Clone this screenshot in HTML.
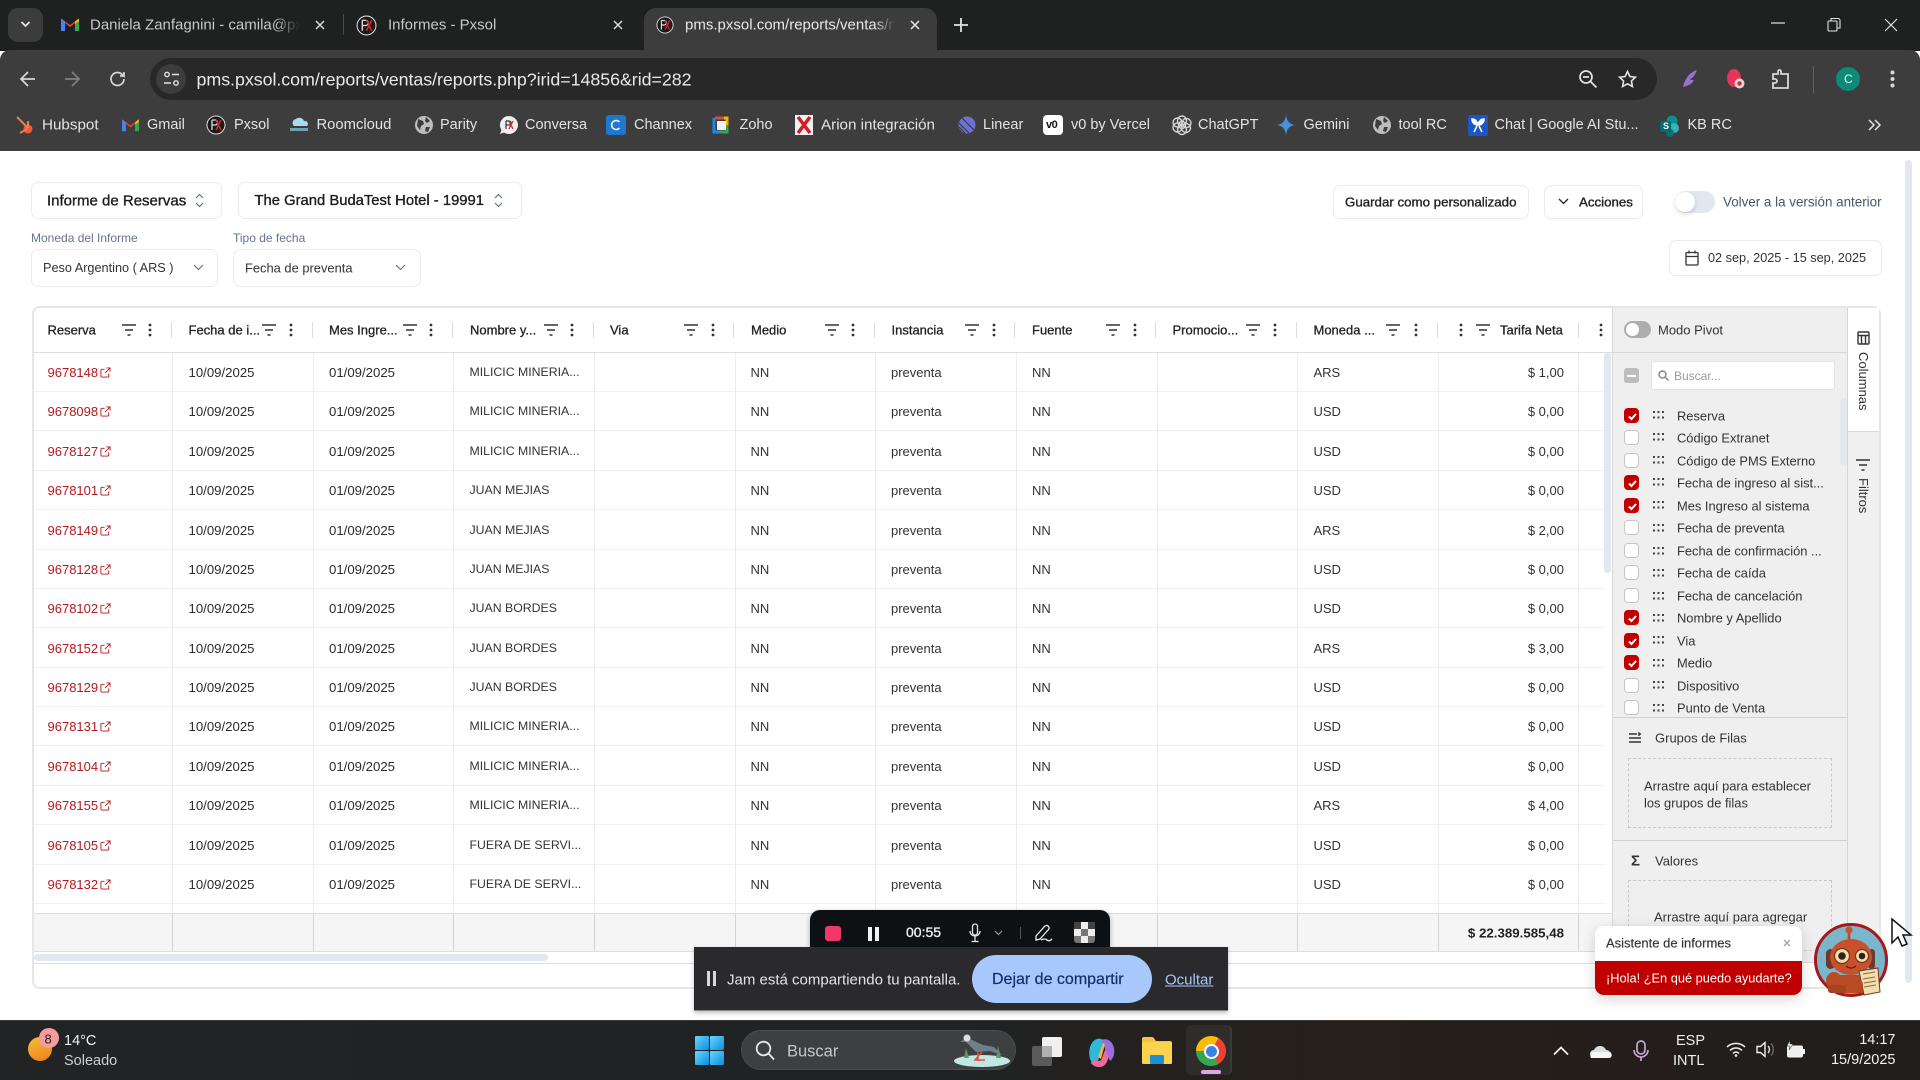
<!DOCTYPE html>
<html lang="es">
<head>
<meta charset="utf-8">
<title>pms.pxsol.com</title>
<style>
*{box-sizing:border-box}
html,body{margin:0;padding:0}
body{position:relative;width:1920px;height:1080px;overflow:hidden;background:#fff;font-family:"Liberation Sans",sans-serif;font-size:13px;color:#333}
.a{position:absolute}
.t{position:absolute;white-space:nowrap;transform:translateY(-50%)}
.m{-webkit-text-stroke:.35px currentColor}
.b{position:absolute;background:#fff;border:1px solid #e8ebef;border-radius:7px}
.ic{position:absolute;overflow:visible}
.bm{position:absolute;top:125px;transform:translateY(-50%);color:#e3e3e3;font-size:14.5px;white-space:nowrap}
.tabt{position:absolute;top:25px;transform:translateY(-50%);font-size:15px;white-space:nowrap;overflow:hidden}
.r{position:absolute;left:34px;width:1569px;height:39.4px;line-height:39px;border-bottom:1px solid #f1f1f1;color:#333;font-size:13px}
.r>*{position:absolute;white-space:nowrap;top:0}
.r>a{left:13.5px;color:#b3191f}
.r>a svg{position:absolute;left:52.500px;top:14px}
.r>.d{left:154.500px;color:#2b2b2b;font-size:13.2px}.r>.e{left:295px;color:#2b2b2b;font-size:13.2px}.r>.f{left:435.5px;font-size:12.3px}.r>.g{left:716.5px}.r>.h{left:857px}.r>.i{left:998px}.r>.j{left:1279.5px}.r>.k{right:39px}
.vl{position:absolute;top:353px;height:551px;width:1px;background:#ececec}
.fvl{position:absolute;top:914px;height:37px;width:1px;background:#d4d4d4}
.hd{position:absolute;top:330px;transform:translateY(-50%);font-size:13px;color:#222;white-space:nowrap;-webkit-text-stroke:.3px #222}
.sep{position:absolute;top:322px;height:16px;width:1px;background:#dcdcdc}
.li{position:absolute;left:0;width:234px;height:22px}
.li i{position:absolute;left:11px;top:3px;width:15px;height:15px;border:1px solid #c6c6c6;border-radius:4px;background:#fff}
.li i.on{background:#c00000;border-color:#c00000}
.li i.on svg{position:absolute;left:2px;top:2px}
.li svg.gr{position:absolute;left:40px;top:6.500px}
.li span{position:absolute;left:64px;top:11px;transform:translateY(-50%);white-space:nowrap;font-size:12.9px;color:#333}
</style>
</head>
<body>
<svg width="0" height="0" style="position:absolute">
<symbol id="flt" viewBox="0 0 14 12"><path d="M0 1h14M3 6h8M5.5 11h3" stroke="#333" stroke-width="1.6" fill="none"/></symbol>
<symbol id="keb" viewBox="0 0 4 14"><circle cx="2" cy="2" r="1.4" fill="#333"/><circle cx="2" cy="7" r="1.4" fill="#333"/><circle cx="2" cy="12" r="1.4" fill="#333"/></symbol>
<symbol id="ext" viewBox="0 0 12 12"><path d="M9.5 7v3a1 1 0 0 1-1 1H2a1 1 0 0 1-1-1V3.500a1 1 0 0 1 1-1h3M7 1h4v4M11 1L5.500 6.500" stroke="#b3191f" stroke-width="1" fill="none"/></symbol>
<symbol id="chk" viewBox="0 0 11 11"><path d="M2 5.500l2.500 2.500L9 3" stroke="#fff" stroke-width="2" fill="none"/></symbol>
<symbol id="grip" viewBox="0 0 12 8"><g fill="#444"><rect x="0" y="0" width="2" height="2"/><rect x="4.500" y="0" width="2" height="2"/><rect x="9" y="0" width="2" height="2"/><rect x="0" y="5.500" width="2" height="2"/><rect x="4.500" y="5.500" width="2" height="2"/><rect x="9" y="5.500" width="2" height="2"/></g></symbol>
<symbol id="px" viewBox="0 0 20 20"><circle cx="10" cy="10" r="9" fill="#1a1a1a" stroke="#ddd" stroke-width="1"/><path d="M6 5v10M6 5h3a2.500 2.500 0 0 1 0 5H6" stroke="#ddd" stroke-width="1.300" fill="none"/><path d="M10 15L15 5M10 5l5 10" stroke="#d2282e" stroke-width="1.500"/></symbol>
<symbol id="gm" viewBox="0 0 20 16"><path d="M1 15V2.500L10 9l9-6.500V15h-4V7l-5 4-5-4v8z" fill="#ea4335"/><path d="M1 15V2.500l4 3V15z" fill="#4285f4"/><path d="M15 15V5.500l4-3V15z" fill="#34a853"/><path d="M15 5.500l4-3V5l-4 3z" fill="#fbbc04"/></symbol>
<symbol id="gl" viewBox="0 0 20 20"><circle cx="10" cy="10" r="9" fill="#bdbdbd"/><path d="M4 4l5 2 1 3-3 2-1 4-3-4zM12 2l4 4-3 2-2-2zM12 12l4 0-2 5-3-1z" fill="#3c3c3c"/></symbol>
</svg>

<!-- Chrome frame -->
<div class="a" style="left:0;top:0;width:1920px;height:51px;background:#1f2020"></div>
<div class="a" style="left:8px;top:8px;width:35px;height:34px;background:#3c3c3c;border-radius:10px"></div>
<svg class="ic" style="left:20px;top:20px" width="11" height="9" viewBox="0 0 11 9"><path d="M1.500 2l4 4 4-4" stroke="#e3e3e3" stroke-width="1.800" fill="none"/></svg>
<svg class="ic" style="left:60px;top:16px" width="20" height="16"><use href="#gm"/></svg>
<div class="tabt" style="left:90px;width:210px;color:#c8c8c8;-webkit-mask-image:linear-gradient(90deg,#000 88%,transparent)">Daniela Zanfagnini - camila@pxsol.com</div>
<svg class="ic" style="left:315px;top:20px" width="10" height="10"><path d="M1 1l8 8M9 1l-8 8" stroke="#d8d8d8" stroke-width="1.500"/></svg>
<div class="a" style="left:343px;top:14px;width:1px;height:21px;background:#4a4a4a"></div>
<svg class="ic" style="left:356px;top:15px" width="21" height="21"><use href="#px"/></svg>
<div class="tabt" style="left:388px;color:#c8c8c8">Informes - Pxsol</div>
<svg class="ic" style="left:613px;top:20px" width="10" height="10"><path d="M1 1l8 8M9 1l-8 8" stroke="#d8d8d8" stroke-width="1.500"/></svg>
<div class="a" style="left:644px;top:8px;width:293px;height:46px;background:#3c3c3c;border-radius:12px 12px 0 0"></div>
<svg class="ic" style="left:656px;top:16px" width="18" height="18"><use href="#px"/></svg>
<div class="tabt" style="left:685px;width:210px;color:#e8e8e8;-webkit-mask-image:linear-gradient(90deg,#000 90%,transparent)">pms.pxsol.com/reports/ventas/reports.php</div>
<svg class="ic" style="left:910px;top:20px" width="10" height="10"><path d="M1 1l8 8M9 1l-8 8" stroke="#e8e8e8" stroke-width="1.500"/></svg>
<svg class="ic" style="left:954px;top:18px" width="14" height="14"><path d="M7 0v14M0 7h14" stroke="#e3e3e3" stroke-width="1.800"/></svg>
<svg class="ic" style="left:1771px;top:22px" width="14" height="2"><path d="M0 1h14" stroke="#e3e3e3" stroke-width="1.200"/></svg>
<svg class="ic" style="left:1827px;top:17px" width="14" height="15" fill="none" stroke="#e3e3e3" stroke-width="1.100"><rect x="1" y="4" width="9" height="10" rx="1"/><path d="M4 4V1.500h7a2 2 0 0 1 2 2V11h-3"/></svg>
<svg class="ic" style="left:1884px;top:18px" width="14" height="14"><path d="M1 1l12 12M13 1L1 13" stroke="#e3e3e3" stroke-width="1.200"/></svg>

<div class="a" style="left:0;top:50px;width:1920px;height:101px;background:#3d3d3d;border-radius:10px 10px 0 0"></div>
<div class="a" style="left:644px;top:40px;width:293px;height:14px;background:#3d3d3d"></div>
<svg class="ic" style="left:19px;top:70px" width="18" height="18" fill="none" stroke="#d8d8d8" stroke-width="1.700"><path d="M16 9H2M9 2L2 9l7 7"/></svg>
<svg class="ic" style="left:63px;top:70px" width="18" height="18" fill="none" stroke="#7f7f7f" stroke-width="1.700"><path d="M2 9h14M9 2l7 7-7 7"/></svg>
<svg class="ic" style="left:109px;top:70px" width="18" height="18" fill="none" stroke="#d8d8d8" stroke-width="1.700"><path d="M15 9a6.500 6.500 0 1 1-2-4.700L15 6V2M15 6h-4"/></svg>
<div class="a" style="left:150px;top:58px;width:1507px;height:42px;background:#282828;border-radius:21px"></div>
<div class="a" style="left:156px;top:64px;width:30px;height:30px;background:#3d3d3d;border-radius:50%"></div>
<svg class="ic" style="left:163px;top:71px" width="17" height="16" fill="none" stroke="#e3e3e3" stroke-width="1.400"><circle cx="4" cy="3.500" r="2.200"/><path d="M9 3.500h7M1 12h7"/><circle cx="13" cy="12" r="2.200"/></svg>
<div class="t" style="left:196.500px;top:80px;font-size:17.85px;color:#e8e8e8;letter-spacing:-.05px">pms.pxsol.com/reports/ventas/reports.php?irid=14856&amp;rid=282</div>
<svg class="ic" style="left:1578px;top:69px" width="20" height="20" fill="none" stroke="#e3e3e3" stroke-width="1.700"><circle cx="8" cy="8" r="6"/><path d="M5 8h6M12.500 12.500l6 6"/></svg>
<svg class="ic" style="left:1618px;top:70px" width="19" height="18" fill="none" stroke="#e3e3e3" stroke-width="1.600"><path d="M9.500 1.500l2.400 5 5.500.7-4 3.800 1 5.500-4.900-2.700-4.900 2.700 1-5.500-4-3.800 5.500-.7z"/></svg>
<svg class="ic" style="left:1681px;top:69px" width="18" height="20"><path d="M16 1C9 3 4 9 2 18c5-1 9-3 11-7-2 0-3 0-4-1 3-1 5-4 7-9z" fill="#9a6fd0"/></svg>
<svg class="ic" style="left:1726px;top:68px" width="20" height="22"><path d="M8 1c4 0 7 4 7 9s-3 9-7 9-7-4-7-9 3-9 7-9z" fill="#e5345a"/><circle cx="13.500" cy="15.500" r="5" fill="#d9d9d9"/><circle cx="13.500" cy="15.500" r="2.200" fill="#d2282e"/></svg>
<svg class="ic" style="left:1771px;top:69px" width="20" height="20" fill="none" stroke="#d8d8d8" stroke-width="1.800"><path d="M2 5h5V2.500a1.500 1.500 0 0 1 3 0V5h7v14H2v-5h2a2 2 0 0 0 0-4H2z"/></svg>
<div class="a" style="left:1813px;top:66px;width:1px;height:27px;background:#606060"></div>
<div class="a" style="left:1836px;top:67px;width:24px;height:24px;background:#0d8a78;border-radius:50%"></div>
<div class="t" style="left:1844px;top:79px;color:#e8f5f2;font-size:12px">C</div>
<svg class="ic" style="left:1890px;top:70px" width="5" height="18"><circle cx="2.500" cy="2.500" r="2" fill="#d8d8d8"/><circle cx="2.500" cy="9" r="2" fill="#d8d8d8"/><circle cx="2.500" cy="15.500" r="2" fill="#d8d8d8"/></svg>

<!-- Bookmarks -->
<svg class="ic" style="left:14px;top:115px" width="22" height="20"><circle cx="14" cy="14" r="4.500" fill="#ef5b3c"/><path d="M14 13L3 2M13 14L6 18M14 13V6" stroke="#ef7b45" stroke-width="2" fill="none"/></svg>
<div class="bm" style="left:42px;font-size:15.2px">Hubspot</div>
<svg class="ic" style="left:121px;top:117px" width="19" height="15"><use href="#gm"/></svg>
<div class="bm" style="left:147px">Gmail</div>
<svg class="ic" style="left:206px;top:115px" width="20" height="20"><use href="#px"/></svg>
<div class="bm" style="left:234px">Pxsol</div>
<svg class="ic" style="left:289px;top:117px" width="20" height="15"><path d="M5 9a4 4 0 0 1 2-7 5 5 0 0 1 8 2 3 3 0 0 1 3 5z" fill="#a5dcef"/><path d="M1 11h18v3H1z" fill="#6ea2b5"/></svg>
<div class="bm" style="left:316.500px;font-size:14.8px">Roomcloud</div>
<svg class="ic" style="left:414px;top:115px" width="20" height="20"><use href="#gl"/></svg>
<div class="bm" style="left:440px">Parity</div>
<svg class="ic" style="left:499px;top:115px" width="20" height="20"><path d="M10 1a9 9 0 1 1-5 16.500L1 19l1.500-4A9 9 0 0 1 10 1z" fill="#eee"/><path d="M7 6v8M7 6h3a2 2 0 0 1 0 4H7" stroke="#333" stroke-width="1.200" fill="none"/><path d="M10 14l4-8M10 6l4 8" stroke="#d2282e" stroke-width="1.300"/></svg>
<div class="bm" style="left:525px">Conversa</div>
<div class="a" style="left:606px;top:115px;width:20px;height:20px;background:#1e78d2;border-radius:3px"></div>
<svg class="ic" style="left:610px;top:119px" width="12" height="12" fill="none" stroke="#fff" stroke-width="1.500"><path d="M9.500 3a4.500 4.500 0 1 0 0 6"/></svg>
<svg class="ic" style="left:711px;top:115px" width="20" height="20" fill="none" stroke-width="3"><path d="M4 3h9" stroke="#e8453c"/><path d="M13 3h3v7" stroke="#f4b400"/><path d="M16 10v7H8" stroke="#34a853"/><path d="M8 17H3V3" stroke="#1e88e5"/><rect x="6" y="6" width="9" height="9" fill="#f1f1f1" stroke="none"/></svg>
<div class="bm" style="left:739.500px">Zoho</div>
<div class="bm" style="left:634px">Channex</div>
<div class="a" style="left:795px;top:115px;width:18px;height:20px;background:#f1f1f1"></div>
<svg class="ic" style="left:795px;top:115px" width="18" height="20"><path d="M3 2l12 16M15 2L3 18" stroke="#d21f26" stroke-width="3.500"/></svg>
<div class="bm" style="left:821px;font-size:15.2px">Arion integración</div>
<svg class="ic" style="left:958px;top:116px" width="18" height="18"><circle cx="9" cy="9" r="8.500" fill="#6a72d8"/><path d="M1 7l10 10M1 11l6 6M4 2l12 12" stroke="#3d3d3d" stroke-width="1.200"/></svg>
<div class="bm" style="left:983px">Linear</div>
<div class="a" style="left:1043px;top:115px;width:20px;height:20px;background:#fff;border-radius:4px"></div>
<div class="t" style="left:1046px;top:125px;color:#111;font-size:11px;font-weight:bold;letter-spacing:-.5px">v0</div>
<div class="bm" style="left:1071px">v0 by Vercel</div>
<svg class="ic" style="left:1172px;top:115px" width="20" height="20" fill="none" stroke="#d4d4d4" stroke-width="1.400"><circle cx="10" cy="10" r="3.500"/><circle cx="10" cy="5.500" r="4.500"/><circle cx="14.500" cy="8" r="4.500"/><circle cx="14" cy="13" r="4.500"/><circle cx="10" cy="15" r="4.500"/><circle cx="5.500" cy="12.500" r="4.500"/><circle cx="5.500" cy="7.500" r="4.500"/></svg>
<div class="bm" style="left:1198px">ChatGPT</div>
<svg class="ic" style="left:1277px;top:115px" width="18" height="20"><path d="M9 0c1 6 3 9 9 10-6 1-8 4-9 10-1-6-3-9-9-10 6-1 8-4 9-10z" fill="#4a8ee0"/></svg>
<div class="bm" style="left:1303.500px">Gemini</div>
<svg class="ic" style="left:1371.500px;top:115px" width="20" height="20"><use href="#gl"/></svg>
<div class="bm" style="left:1398.500px">tool RC</div>
<div class="a" style="left:1468px;top:115px;width:20px;height:21px;background:#1a56c4;border-radius:2px"></div>
<svg class="ic" style="left:1470px;top:118px" width="16" height="15"><path d="M2 1c3 0 5 2 6 6-3 0-6-2-6-6zM14 1c-3 0-5 2-6 6 3 0 6-2 6-6zM7 8l-3 6M9 8l3 6" stroke="#fff" stroke-width="1.600" fill="#fff"/></svg>
<div class="bm" style="left:1494.500px">Chat | Google AI Stu...</div>
<svg class="ic" style="left:1659px;top:115px" width="21" height="22"><circle cx="13" cy="6" r="5.500" fill="#0c8f8f"/><circle cx="15" cy="13" r="5" fill="#37b3b8"/><circle cx="11" cy="18" r="4" fill="#0f6f78"/><rect x="1" y="6" width="11" height="11" rx="1.500" fill="#036c70"/></svg>
<div class="t" style="left:1663px;top:126px;color:#fff;font-size:9px;font-weight:bold">S</div>
<div class="bm" style="left:1687.500px">KB RC</div>
<svg class="ic" style="left:1868px;top:119px" width="13" height="12" fill="none" stroke="#e3e3e3" stroke-width="1.500"><path d="M1 1l5 5-5 5M7 1l5 5-5 5"/></svg>

<!-- Top controls -->
<div class="b" style="left:31px;top:182px;width:191px;height:37px"></div>
<div class="t m" style="left:47px;top:200.500px;font-size:15px;color:#1d1d1d">Informe de Reservas</div>
<svg class="ic" style="left:195px;top:193px" width="9" height="15" fill="none" stroke="#64748b" stroke-width="1.200"><path d="M1 5l3.500-3.500L8 5M1 10l3.500 3.500L8 10"/></svg>
<div class="b" style="left:238px;top:182px;width:284px;height:37px"></div>
<div class="t m" style="left:254.500px;top:200.500px;font-size:14.8px;color:#1d1d1d">The Grand BudaTest Hotel - 19991</div>
<svg class="ic" style="left:494px;top:193px" width="9" height="15" fill="none" stroke="#64748b" stroke-width="1.200"><path d="M1 5l3.500-3.500L8 5M1 10l3.500 3.500L8 10"/></svg>
<div class="t" style="left:31px;top:238px;font-size:12px;color:#64748b">Moneda del Informe</div>
<div class="t" style="left:233px;top:238px;font-size:12px;color:#64748b">Tipo de fecha</div>
<div class="b" style="left:31px;top:249px;width:187px;height:38px"></div>
<div class="t" style="left:43px;top:267.500px;font-size:12.7px;color:#333">Peso Argentino ( ARS )</div>
<svg class="ic" style="left:193px;top:264px" width="11" height="7" fill="none" stroke="#64748b" stroke-width="1.200"><path d="M1 1l4.500 4.500L10 1"/></svg>
<div class="b" style="left:233px;top:249px;width:188px;height:38px"></div>
<div class="t" style="left:245px;top:267.500px;font-size:12.9px;color:#333">Fecha de preventa</div>
<svg class="ic" style="left:395px;top:264px" width="11" height="7" fill="none" stroke="#64748b" stroke-width="1.200"><path d="M1 1l4.500 4.500L10 1"/></svg>

<div class="b" style="left:1333px;top:185px;width:196px;height:34px"></div>
<div class="t m" style="left:1345px;top:202px;font-size:13.3px;color:#222">Guardar como personalizado</div>
<div class="b" style="left:1544px;top:185px;width:99px;height:34px"></div>
<svg class="ic" style="left:1558px;top:198px" width="11" height="8" fill="none" stroke="#222" stroke-width="1.300"><path d="M1 1l4.500 4.500L10 1"/></svg>
<div class="t m" style="left:1579px;top:202px;font-size:13.3px;color:#222">Acciones</div>
<div class="a" style="left:1674.500px;top:191px;width:40px;height:22px;background:#e2e8f0;border-radius:11px"></div>
<div class="a" style="left:1675px;top:192px;width:20px;height:20px;background:#fff;border-radius:50%;box-shadow:0 2px 5px rgba(0,0,0,.15)"></div>
<div class="t" style="left:1723px;top:202px;font-size:13.4px;color:#475569">Volver a la versión anterior</div>
<div class="b" style="left:1669px;top:240px;width:213px;height:36px"></div>
<svg class="ic" style="left:1685px;top:250px" width="14" height="16" fill="none" stroke="#333" stroke-width="1.300"><rect x="1" y="2.500" width="12" height="12.500" rx="1"/><path d="M1 6.500h12M4 .5v3M10 .5v3"/></svg>
<div class="t" style="left:1708px;top:258px;font-size:12.7px;color:#333">02 sep, 2025 - 15 sep, 2025</div>

<!-- Page scrollbar -->
<div class="a" style="left:1905px;top:160px;width:7px;height:823px;background:#e2e8f0;border-radius:4px"></div>

<!-- Table card -->
<div class="a" style="left:32px;top:306px;width:1849px;height:683px;border:2px solid #e6e6e6;border-radius:8px;background:#fff"></div>
<div class="a" style="left:34px;top:352px;width:1578px;height:1px;background:#dedede"></div>

<div class="hd" style="left:47.500px">Reserva</div>
<div class="hd" style="left:188.500px">Fecha de i...</div>
<div class="hd" style="left:329px">Mes Ingre...</div>
<div class="hd" style="left:470px">Nombre y...</div>
<div class="hd" style="left:610px">Via</div>
<div class="hd" style="left:751px">Medio</div>
<div class="hd" style="left:891.500px">Instancia</div>
<div class="hd" style="left:1032px">Fuente</div>
<div class="hd" style="left:1172.500px">Promocio...</div>
<div class="hd" style="left:1313.500px">Moneda ...</div>
<div class="hd" style="left:1500px">Tarifa Neta</div>

<svg class="ic" style="left:122px;top:324px" width="14" height="12"><use href="#flt"/></svg><svg class="ic" style="left:148px;top:323px" width="4" height="14"><use href="#keb"/></svg><div class="sep" style="left:171px"></div>
<svg class="ic" style="left:262px;top:324px" width="14" height="12"><use href="#flt"/></svg><svg class="ic" style="left:289px;top:323px" width="4" height="14"><use href="#keb"/></svg><div class="sep" style="left:312px"></div>
<svg class="ic" style="left:403px;top:324px" width="14" height="12"><use href="#flt"/></svg><svg class="ic" style="left:429px;top:323px" width="4" height="14"><use href="#keb"/></svg><div class="sep" style="left:452px"></div>
<svg class="ic" style="left:544px;top:324px" width="14" height="12"><use href="#flt"/></svg><svg class="ic" style="left:570px;top:323px" width="4" height="14"><use href="#keb"/></svg><div class="sep" style="left:593px"></div>
<svg class="ic" style="left:684px;top:324px" width="14" height="12"><use href="#flt"/></svg><svg class="ic" style="left:711px;top:323px" width="4" height="14"><use href="#keb"/></svg><div class="sep" style="left:733px"></div>
<svg class="ic" style="left:825px;top:324px" width="14" height="12"><use href="#flt"/></svg><svg class="ic" style="left:851px;top:323px" width="4" height="14"><use href="#keb"/></svg><div class="sep" style="left:874px"></div>
<svg class="ic" style="left:965px;top:324px" width="14" height="12"><use href="#flt"/></svg><svg class="ic" style="left:992px;top:323px" width="4" height="14"><use href="#keb"/></svg><div class="sep" style="left:1014px"></div>
<svg class="ic" style="left:1106px;top:324px" width="14" height="12"><use href="#flt"/></svg><svg class="ic" style="left:1133px;top:323px" width="4" height="14"><use href="#keb"/></svg><div class="sep" style="left:1155px"></div>
<svg class="ic" style="left:1246px;top:324px" width="14" height="12"><use href="#flt"/></svg><svg class="ic" style="left:1273px;top:323px" width="4" height="14"><use href="#keb"/></svg><div class="sep" style="left:1296px"></div>
<svg class="ic" style="left:1386px;top:324px" width="14" height="12"><use href="#flt"/></svg><svg class="ic" style="left:1414px;top:323px" width="4" height="14"><use href="#keb"/></svg><div class="sep" style="left:1437px"></div>
<svg class="ic" style="left:1459px;top:323px" width="4" height="14"><use href="#keb"/></svg><svg class="ic" style="left:1476px;top:324px" width="14" height="12"><use href="#flt"/></svg><div class="sep" style="left:1578px"></div>
<svg class="ic" style="left:1599px;top:323px" width="4" height="14"><use href="#keb"/></svg>

<!-- Rows -->
<div class="r" style="top:352.500px"><a>9678148<svg width="11" height="11"><use href="#ext"/></svg></a><span class="d">10/09/2025</span><span class="e">01/09/2025</span><span class="f">MILICIC MINERIA...</span><span class="g">NN</span><span class="h">preventa</span><span class="i">NN</span><span class="j">ARS</span><span class="k">$ 1,00</span></div>
<div class="r" style="top:391.900px"><a>9678098<svg width="11" height="11"><use href="#ext"/></svg></a><span class="d">10/09/2025</span><span class="e">01/09/2025</span><span class="f">MILICIC MINERIA...</span><span class="g">NN</span><span class="h">preventa</span><span class="i">NN</span><span class="j">USD</span><span class="k">$ 0,00</span></div>
<div class="r" style="top:431.500px"><a>9678127<svg width="11" height="11"><use href="#ext"/></svg></a><span class="d">10/09/2025</span><span class="e">01/09/2025</span><span class="f">MILICIC MINERIA...</span><span class="g">NN</span><span class="h">preventa</span><span class="i">NN</span><span class="j">USD</span><span class="k">$ 0,00</span></div>
<div class="r" style="top:470.900px"><a>9678101<svg width="11" height="11"><use href="#ext"/></svg></a><span class="d">10/09/2025</span><span class="e">01/09/2025</span><span class="f">JUAN MEJIAS</span><span class="g">NN</span><span class="h">preventa</span><span class="i">NN</span><span class="j">USD</span><span class="k">$ 0,00</span></div>
<div class="r" style="top:510.500px"><a>9678149<svg width="11" height="11"><use href="#ext"/></svg></a><span class="d">10/09/2025</span><span class="e">01/09/2025</span><span class="f">JUAN MEJIAS</span><span class="g">NN</span><span class="h">preventa</span><span class="i">NN</span><span class="j">ARS</span><span class="k">$ 2,00</span></div>
<div class="r" style="top:549.500px"><a>9678128<svg width="11" height="11"><use href="#ext"/></svg></a><span class="d">10/09/2025</span><span class="e">01/09/2025</span><span class="f">JUAN MEJIAS</span><span class="g">NN</span><span class="h">preventa</span><span class="i">NN</span><span class="j">USD</span><span class="k">$ 0,00</span></div>
<div class="r" style="top:588.900px"><a>9678102<svg width="11" height="11"><use href="#ext"/></svg></a><span class="d">10/09/2025</span><span class="e">01/09/2025</span><span class="f">JUAN BORDES</span><span class="g">NN</span><span class="h">preventa</span><span class="i">NN</span><span class="j">USD</span><span class="k">$ 0,00</span></div>
<div class="r" style="top:628.500px"><a>9678152<svg width="11" height="11"><use href="#ext"/></svg></a><span class="d">10/09/2025</span><span class="e">01/09/2025</span><span class="f">JUAN BORDES</span><span class="g">NN</span><span class="h">preventa</span><span class="i">NN</span><span class="j">ARS</span><span class="k">$ 3,00</span></div>
<div class="r" style="top:667.700px"><a>9678129<svg width="11" height="11"><use href="#ext"/></svg></a><span class="d">10/09/2025</span><span class="e">01/09/2025</span><span class="f">JUAN BORDES</span><span class="g">NN</span><span class="h">preventa</span><span class="i">NN</span><span class="j">USD</span><span class="k">$ 0,00</span></div>
<div class="r" style="top:707.100px"><a>9678131<svg width="11" height="11"><use href="#ext"/></svg></a><span class="d">10/09/2025</span><span class="e">01/09/2025</span><span class="f">MILICIC MINERIA...</span><span class="g">NN</span><span class="h">preventa</span><span class="i">NN</span><span class="j">USD</span><span class="k">$ 0,00</span></div>
<div class="r" style="top:746.500px"><a>9678104<svg width="11" height="11"><use href="#ext"/></svg></a><span class="d">10/09/2025</span><span class="e">01/09/2025</span><span class="f">MILICIC MINERIA...</span><span class="g">NN</span><span class="h">preventa</span><span class="i">NN</span><span class="j">USD</span><span class="k">$ 0,00</span></div>
<div class="r" style="top:785.900px"><a>9678155<svg width="11" height="11"><use href="#ext"/></svg></a><span class="d">10/09/2025</span><span class="e">01/09/2025</span><span class="f">MILICIC MINERIA...</span><span class="g">NN</span><span class="h">preventa</span><span class="i">NN</span><span class="j">ARS</span><span class="k">$ 4,00</span></div>
<div class="r" style="top:825.500px"><a>9678105<svg width="11" height="11"><use href="#ext"/></svg></a><span class="d">10/09/2025</span><span class="e">01/09/2025</span><span class="f">FUERA DE SERVI...</span><span class="g">NN</span><span class="h">preventa</span><span class="i">NN</span><span class="j">USD</span><span class="k">$ 0,00</span></div>
<div class="r" style="top:864.700px"><a>9678132<svg width="11" height="11"><use href="#ext"/></svg></a><span class="d">10/09/2025</span><span class="e">01/09/2025</span><span class="f">FUERA DE SERVI...</span><span class="g">NN</span><span class="h">preventa</span><span class="i">NN</span><span class="j">USD</span><span class="k">$ 0,00</span></div>

<div class="vl" style="left:172px;height:560px"></div><div class="vl" style="left:313px;height:560px"></div><div class="vl" style="left:453px;height:560px"></div><div class="vl" style="left:594px;height:560px"></div><div class="vl" style="left:735px;height:560px"></div><div class="vl" style="left:875px;height:560px"></div><div class="vl" style="left:1016px;height:560px"></div><div class="vl" style="left:1157px;height:560px"></div><div class="vl" style="left:1297px;height:560px"></div><div class="vl" style="left:1438px;height:560px"></div><div class="vl" style="left:1578px;height:560px"></div>

<!-- Footer row -->
<div class="a" style="left:34px;top:913px;width:1578px;height:39px;background:#f5f5f5;border-top:1px solid #dedede;border-bottom:1px solid #dedede"></div>
<div class="fvl" style="left:172px"></div><div class="fvl" style="left:313px"></div><div class="fvl" style="left:453px"></div><div class="fvl" style="left:594px"></div><div class="fvl" style="left:735px"></div><div class="fvl" style="left:875px"></div><div class="fvl" style="left:1016px"></div><div class="fvl" style="left:1157px"></div><div class="fvl" style="left:1297px"></div><div class="fvl" style="left:1438px"></div><div class="fvl" style="left:1578px"></div>
<div class="t" style="right:356px;top:932.500px;font-size:13.3px;font-weight:bold;color:#222">$ 22.389.585,48</div>
<div class="a" style="left:34px;top:963px;width:1578px;height:1px;background:#dedede"></div>
<div class="a" style="left:34px;top:954px;width:514px;height:7px;background:#e2e8f0;border-radius:4px"></div>

<!-- Vertical table scrollbar -->
<div class="a" style="left:1604px;top:353px;width:7px;height:220px;background:#e2e8f0;border-radius:3px"></div>

<!-- Side panel -->
<div class="a" style="left:1612px;top:308px;width:236px;height:655px;background:#efefef;border-left:1px solid #d8d8d8;border-right:1px solid #d4d4d4;border-bottom:1px solid #d8d8d8"></div>
<div class="a" style="left:1848px;top:432px;width:31px;height:531px;background:#f0f0f0"></div>
<div class="a" style="left:1613px;top:352px;width:234px;height:1px;background:#d8d8d8"></div>
<div class="a" style="left:1624px;top:321px;width:27px;height:17px;background:#adadad;border-radius:9px"></div>
<div class="a" style="left:1626px;top:323px;width:13px;height:13px;background:#fff;border-radius:50%"></div>
<div class="t" style="left:1658px;top:330px;font-size:13px;color:#333">Modo Pivot</div>
<div class="a" style="left:1624px;top:368px;width:15px;height:15px;background:#bdbdbd;border-radius:3px"></div>
<div class="a" style="left:1627px;top:374.500px;width:9px;height:2px;background:#fff"></div>
<div class="a" style="left:1651px;top:361px;width:184px;height:29px;background:#fff;border:1px solid #e2e2e2;border-radius:3px"></div>
<svg class="ic" style="left:1658px;top:370px" width="11" height="11" fill="none" stroke="#8a8a8a" stroke-width="1.500"><circle cx="4.500" cy="4.500" r="3.500"/><path d="M7 7l3.500 3.500"/></svg>
<div class="t" style="left:1674px;top:376px;font-size:12px;color:#9a9a9a">Buscar...</div>

<div class="a" style="left:1613px;top:400px;width:234px;height:317px;overflow:hidden">
<div class="li" style="top:4.500px"><i class="on"><svg width="11" height="11"><use href="#chk"/></svg></i><svg class="gr" width="12" height="8"><use href="#grip"/></svg><span>Reserva</span></div>
<div class="li" style="top:26.700px"><i></i><svg class="gr" width="12" height="8"><use href="#grip"/></svg><span>Código Extranet</span></div>
<div class="li" style="top:49.500px"><i></i><svg class="gr" width="12" height="8"><use href="#grip"/></svg><span>Código de PMS Externo</span></div>
<div class="li" style="top:71.500px"><i class="on"><svg width="11" height="11"><use href="#chk"/></svg></i><svg class="gr" width="12" height="8"><use href="#grip"/></svg><span>Fecha de ingreso al sist...</span></div>
<div class="li" style="top:94.500px"><i class="on"><svg width="11" height="11"><use href="#chk"/></svg></i><svg class="gr" width="12" height="8"><use href="#grip"/></svg><span>Mes Ingreso al sistema</span></div>
<div class="li" style="top:117px"><i></i><svg class="gr" width="12" height="8"><use href="#grip"/></svg><span>Fecha de preventa</span></div>
<div class="li" style="top:140px"><i></i><svg class="gr" width="12" height="8"><use href="#grip"/></svg><span>Fecha de confirmación ...</span></div>
<div class="li" style="top:162px"><i></i><svg class="gr" width="12" height="8"><use href="#grip"/></svg><span>Fecha de caída</span></div>
<div class="li" style="top:185px"><i></i><svg class="gr" width="12" height="8"><use href="#grip"/></svg><span>Fecha de cancelación</span></div>
<div class="li" style="top:207px"><i class="on"><svg width="11" height="11"><use href="#chk"/></svg></i><svg class="gr" width="12" height="8"><use href="#grip"/></svg><span>Nombre y Apellido</span></div>
<div class="li" style="top:229.600px"><i class="on"><svg width="11" height="11"><use href="#chk"/></svg></i><svg class="gr" width="12" height="8"><use href="#grip"/></svg><span>Via</span></div>
<div class="li" style="top:252px"><i class="on"><svg width="11" height="11"><use href="#chk"/></svg></i><svg class="gr" width="12" height="8"><use href="#grip"/></svg><span>Medio</span></div>
<div class="li" style="top:274.500px"><i></i><svg class="gr" width="12" height="8"><use href="#grip"/></svg><span>Dispositivo</span></div>
<div class="li" style="top:297px"><i></i><svg class="gr" width="12" height="8"><use href="#grip"/></svg><span>Punto de Venta</span></div>
</div>
<div class="a" style="left:1840px;top:398px;width:7px;height:67px;background:#e4e8ee;border-radius:3px"></div>
<div class="a" style="left:1613px;top:717px;width:234px;height:1px;background:#d0d0d0"></div>
<svg class="ic" style="left:1629px;top:732px" width="14" height="12" fill="none" stroke="#333" stroke-width="1.400"><path d="M0 2h8M0 6h12M0 10h12M10 4V1l2 1.500"/></svg>
<div class="t" style="left:1655px;top:738px;font-size:13px;color:#333">Grupos de Filas</div>
<div class="a" style="left:1628px;top:758px;width:204px;height:70px;border:1px dashed #c9c9c9"></div>
<div class="t" style="left:1644px;top:786px;font-size:12.9px;color:#333">Arrastre aquí para establecer</div>
<div class="t" style="left:1644px;top:803px;font-size:12.9px;color:#333">los grupos de filas</div>
<div class="a" style="left:1613px;top:840px;width:234px;height:1px;background:#d0d0d0"></div>
<div class="t" style="left:1631px;top:861px;font-size:15px;font-weight:bold;color:#333">Σ</div>
<div class="t" style="left:1655px;top:861px;font-size:13px;color:#333">Valores</div>
<div class="a" style="left:1628px;top:880px;width:204px;height:71px;border:1px dashed #c9c9c9"></div>
<div class="t" style="left:1654px;top:917px;font-size:13px;color:#333">Arrastre aquí para agregar</div>

<!-- Side tabs -->
<div class="a" style="left:1848px;top:308px;width:31px;height:124px;background:#fff;border-bottom:1px solid #d8d8d8"></div>
<svg class="ic" style="left:1857px;top:331px" width="13" height="14" fill="none" stroke="#333" stroke-width="1.400"><rect x="1" y="1" width="11" height="12" rx="1"/><path d="M1 4.500h11M4.500 4.500V13M8.500 4.500V13"/></svg>
<div class="a" style="left:1863.500px;top:352px;font-size:13px;color:#333;writing-mode:vertical-rl;white-space:nowrap;transform:translateX(-50%)">Columnas</div>
<svg class="ic" style="left:1856px;top:459px" width="14" height="12"><use href="#flt"/></svg>
<div class="a" style="left:1863.500px;top:478px;font-size:13px;color:#333;writing-mode:vertical-rl;white-space:nowrap;transform:translateX(-50%)">Filtros</div>

<!-- Assistant -->
<div class="a" style="left:1595px;top:926px;width:207px;height:69px;border-radius:9px;overflow:hidden;box-shadow:0 4px 14px rgba(0,0,0,.16)">
<div class="a" style="left:0;top:0;width:207px;height:35px;background:#fff"></div>
<div class="a" style="left:0;top:35px;width:207px;height:34px;background:#c00000"></div>
</div>
<div class="t m" style="left:1606px;top:943px;font-size:13px;color:#333;-webkit-text-stroke:.15px #333">Asistente de informes</div>
<svg class="ic" style="left:1783px;top:939px" width="8" height="8"><path d="M1 1l6 6M7 1L1 7" stroke="#aaa" stroke-width="1.500"/></svg>
<div class="t" style="left:1606px;top:978px;font-size:12.8px;color:#fff">¡Hola! ¿En qué puedo ayudarte?</div>

<svg class="ic" style="left:1814px;top:923px" width="74" height="74" viewBox="0 0 74 74">
<circle cx="37" cy="37" r="35.500" fill="#7ab7cc" stroke="#a8171d" stroke-width="3"/>
<path d="M35 17V8" stroke="#b94a22" stroke-width="2.500"/><circle cx="35" cy="7" r="3.500" fill="#c9532a"/>
<rect x="12" y="26" width="9" height="20" rx="4.500" fill="#6b3a2a"/><rect x="54" y="26" width="7" height="20" rx="3.500" fill="#6b3a2a"/>
<ellipse cx="37" cy="34" rx="21" ry="18" fill="#c9502a"/>
<circle cx="28" cy="33" r="7.500" fill="#f3dcae" stroke="#6b3a1e" stroke-width="1.200"/><circle cx="28" cy="33" r="3.800" fill="#33210f"/>
<circle cx="48" cy="33" r="6.500" fill="#f3dcae" stroke="#6b3a1e" stroke-width="1.200"/><circle cx="48" cy="33" r="3.300" fill="#33210f"/>
<path d="M32 43q5 4 10 0" stroke="#5a2a14" stroke-width="1.300" fill="none"/>
<path d="M25 52h24v18H25z" fill="#b94a24"/><ellipse cx="20" cy="58" rx="8" ry="9" fill="#b94a24"/><rect x="14" y="62" width="18" height="8" rx="3" fill="#a8431f"/>
<path d="M45 48l19-3 2 24-16 3z" fill="#f3dcae" stroke="#6b3a1e"/><path d="M49 51l12-2M49 56l12-2M50 60l12-2M50 64l12-2" stroke="#8a6a3e" stroke-width="1"/>
<rect x="40" y="58" width="9" height="9" rx="3" fill="#b94a24"/>
</svg>

<!-- Cursor -->
<svg class="ic" style="left:1891px;top:918px" width="22" height="30"><path d="M1 1v24l6-6 4 9 5-2-4-9h8z" fill="#fff" stroke="#111" stroke-width="1.500"/></svg>

<!-- Jam controls -->
<div class="a" style="left:810px;top:910px;width:300px;height:40px;background:#0d1113;border-radius:10px 10px 0 0;box-shadow:0 2px 6px rgba(0,0,0,.3)"></div>
<div class="a" style="left:825px;top:926px;width:16px;height:15px;background:#f0386b;border-radius:3px"></div>
<div class="a" style="left:868px;top:927px;width:4px;height:14px;background:#f2f2f2"></div>
<div class="a" style="left:874.500px;top:927px;width:4px;height:14px;background:#f2f2f2"></div>
<div class="t m" style="left:906px;top:932px;font-size:14px;color:#eee">00:55</div>
<svg class="ic" style="left:969px;top:923px" width="12" height="20" fill="none" stroke="#e8e8e8" stroke-width="1.300"><rect x="3.500" y="1" width="5" height="11" rx="2.500"/><path d="M1 8a5 5 0 0 0 10 0M6 13v5M2.500 18.500h7"/></svg>
<svg class="ic" style="left:994px;top:930px" width="9" height="6" fill="none" stroke="#9a9a9a" stroke-width="1.200"><path d="M1 1l3.500 3.500L8 1"/></svg>
<div class="a" style="left:1020px;top:927px;width:1px;height:12px;background:#555"></div>
<svg class="ic" style="left:1035px;top:924px" width="18" height="18" fill="none" stroke="#eee" stroke-width="1.300"><path d="M1 12L10 2a2.500 2.500 0 0 1 3.500 3.500L5 15l-4 1zM6 16q4-2 6 0t5-1"/></svg>
<svg class="ic" style="left:1074px;top:922px" width="21" height="21"><rect width="21" height="21" rx="3" fill="#777"/><rect x="7" width="7" height="7" fill="#eee"/><rect y="7" width="7" height="7" fill="#eee"/><rect x="14" y="7" width="7" height="7" fill="#eee"/><rect x="7" y="14" width="7" height="7" fill="#eee"/><rect width="7" height="7" fill="#444"/><rect x="14" width="7" height="7" fill="#444"/></svg>

<!-- Jam share bar -->
<div class="a" style="left:694px;top:947px;width:534px;height:64px;background:#2a2a2c;border-bottom:1px solid #888;box-shadow:0 2px 4px rgba(0,0,0,.25)"></div>
<div class="a" style="left:707px;top:971px;width:3px;height:15px;background:#d8d8d8"></div>
<div class="a" style="left:713px;top:971px;width:3px;height:15px;background:#d8d8d8"></div>
<div class="t" style="left:727px;top:979.500px;font-size:15px;color:#e3e3e3">Jam está compartiendo tu pantalla.</div>
<div class="a" style="left:972px;top:955px;width:180px;height:48px;background:#a8c7fa;border-radius:24px"></div>
<div class="t" style="left:992px;top:980px;font-size:16px;color:#0f2f6e;-webkit-text-stroke:.2px #0f2f6e">Dejar de compartir</div>
<div class="t" style="left:1165px;top:979.500px;font-size:15px;color:#a8c7fa;text-decoration:underline">Ocultar</div>

<!-- Taskbar -->
<div class="a" style="left:0;top:1020px;width:1920px;height:60px;background:linear-gradient(90deg,#212324 0%,#202223 50%,#261f1a 70%,#201e1d 100%);border-top:1px solid #3a3a3a"></div>
<div class="a" style="left:28px;top:1037px;width:24px;height:24px;border-radius:50%;background:linear-gradient(160deg,#f2c13a,#f07b1d)"></div>
<div class="a" style="left:38.500px;top:1028px;width:20px;height:20px;border-radius:50%;background:#f99aa0"></div>
<div class="t" style="left:44.500px;top:1038.500px;font-size:13px;color:#222">8</div>
<div class="t" style="left:64px;top:1040.500px;font-size:14.500px;color:#f2f2f2">14°C</div>
<div class="t" style="left:64px;top:1060.500px;font-size:14.500px;color:#cfcfcf">Soleado</div>

<svg class="ic" style="left:695px;top:1036px" width="29" height="29"><defs><linearGradient id="w" x1="0" y1="0" x2="1" y2="1"><stop offset="0" stop-color="#6ad4ff"/><stop offset="1" stop-color="#0a8fdd"/></linearGradient></defs><g fill="url(#w)"><rect width="14" height="14" rx="1"/><rect x="15" width="14" height="14" rx="1"/><rect y="15" width="14" height="14" rx="1"/><rect x="15" y="15" width="14" height="14" rx="1"/></g></svg>
<div class="a" style="left:741px;top:1030px;width:275px;height:40px;background:#3d3f40;border-radius:20px;border:1px solid #4a4c4d"></div>
<svg class="ic" style="left:755px;top:1040px" width="20" height="21" fill="none" stroke="#e8e8e8" stroke-width="1.800"><circle cx="8.500" cy="8.500" r="6.800"/><path d="M13.500 13.500l5.500 6"/></svg>
<div class="t" style="left:787px;top:1051.500px;font-size:16.500px;color:#c8c8c8">Buscar</div>
<svg class="ic" style="left:950px;top:1032px" width="60" height="36"><ellipse cx="32" cy="29" rx="28" ry="6" fill="#bfe8e4"/><path d="M14 26l2-10 3 10zM46 26l2-12 3 12z" fill="#5d9a5e"/><path d="M33 13L20 7a4 4 0 0 0-5 0L10 10l6 0 10 10 14-1 12 4-8-8z" fill="#6e7f8c"/><circle cx="17" cy="6" r="3.500" fill="#ddd"/><path d="M28 20v9M32 20l-7 8h10" stroke="#e84b3c" stroke-width="1.500" fill="none"/></svg>
<svg class="ic" style="left:1031px;top:1036px" width="31" height="30"><rect x="1" y="10" width="20" height="20" rx="2" fill="#5a5a5a"/><rect x="11" y="1" width="20" height="20" rx="2" fill="#f0f0f0"/><rect x="11" y="10" width="10" height="11" fill="#b0b0b0"/></svg>
<svg class="ic" style="left:1087px;top:1037px" width="29" height="29"><path d="M4 24C0 16 3 4 10 2c3-1 6 0 7 3L11 24c-1 3-5 3-7 0z" fill="#30b8d8"/><path d="M6 24c3 4 9 4 11 0l5-13" fill="none" stroke="#ee6a9a" stroke-width="6"/><path d="M15 3c4-2 10 0 12 8 1 6-1 11-4 13L15 4z" fill="#9a6de0"/><path d="M11 20L16 6l2 1-4 15z" fill="#f4b63f"/></svg>
<svg class="ic" style="left:1141px;top:1036px" width="31" height="28"><path d="M1 3a2 2 0 0 1 2-2h9l3 4h14a2 2 0 0 1 2 2v19a2 2 0 0 1-2 2H3a2 2 0 0 1-2-2z" fill="#f5c33b"/><rect x="1" y="6" width="30" height="22" rx="1" fill="#fcd34d"/><rect x="9" y="19" width="14" height="9" rx="1" fill="#1c8fd6"/></svg>
<div class="a" style="left:1186px;top:1025px;width:46px;height:50px;background:#2f2d2b;border-radius:5px;border-right:2px solid #3c3a38"></div>
<div class="a" style="left:1196px;top:1036px;width:30px;height:30px;border-radius:50%;background:conic-gradient(from 30deg,#ea4335 0 120deg,#34a853 120deg 240deg,#fbbc04 240deg 360deg)"></div>
<div class="a" style="left:1203.500px;top:1043.500px;width:15px;height:15px;border-radius:50%;background:#3b82e8;border:2px solid #fff"></div>
<div class="a" style="left:1201px;top:1070px;width:20px;height:4px;border-radius:2px;background:#d9a8e8"></div>

<svg class="ic" style="left:1553px;top:1046px" width="16" height="10" fill="none" stroke="#eee" stroke-width="1.800"><path d="M1 8.500l7-7 7 7"/></svg>
<svg class="ic" style="left:1590px;top:1042px" width="21" height="17"><path d="M4 16a4 4 0 0 1 0-8 6.500 6.500 0 0 1 12 0 4 4 0 0 1 1 8z" fill="#ddd"/><path d="M1 16a4 4 0 0 1 3-6h16a3.500 3.500 0 0 1 0 6z" fill="#f5f5f5"/></svg>
<svg class="ic" style="left:1633px;top:1040px" width="16" height="22" fill="none" stroke="#c8a6d6" stroke-width="1.700"><rect x="4" y="1" width="8" height="13" rx="4"/><path d="M1 10a7 7 0 0 0 14 0M8 17v4"/></svg>
<div class="t" style="left:1676px;top:1041px;font-size:14.500px;color:#eee">ESP</div>
<div class="t" style="left:1673px;top:1061px;font-size:14.500px;color:#eee">INTL</div>
<svg class="ic" style="left:1726px;top:1041px" width="20" height="16" fill="none" stroke="#f0f0f0" stroke-width="1.500"><path d="M1 6a13 13 0 0 1 18 0M4 9.500a8.500 8.500 0 0 1 12 0M7 12.500a4 4 0 0 1 6 0"/><circle cx="10" cy="14.500" r="1.300" fill="#f0f0f0" stroke="none"/></svg>
<svg class="ic" style="left:1756px;top:1041px" width="20" height="17" fill="none" stroke-width="1.400"><path d="M1 5.500h3.500L9 1.500v14L4.500 11.500H1z" stroke="#f0f0f0"/><path d="M12 5a5 5 0 0 1 0 7" stroke="#e0e0e0"/><path d="M15 2.500a9 9 0 0 1 0 12" stroke="#666"/></svg>
<svg class="ic" style="left:1785px;top:1040px" width="20" height="19"><path d="M4 6h12a1.500 1.500 0 0 1 1.500 1.500v8a1.500 1.500 0 0 1-1.500 1.500H4a1.500 1.500 0 0 1-1.500-1.500v-8A1.500 1.500 0 0 1 4 6z" fill="#eee" stroke="#f5f5f5"/><rect x="18" y="9" width="2" height="5" fill="#eee"/><path d="M5 0L2 6h3l-1 4 4-6H5z" fill="#f5f5f5" stroke="#222" stroke-width=".5"/></svg>
<div class="t" style="right:24.500px;top:1040px;font-size:14.500px;color:#f2f2f2">14:17</div>
<div class="t" style="right:24.500px;top:1060px;font-size:14.500px;color:#f2f2f2">15/9/2025</div>
</body>
</html>
